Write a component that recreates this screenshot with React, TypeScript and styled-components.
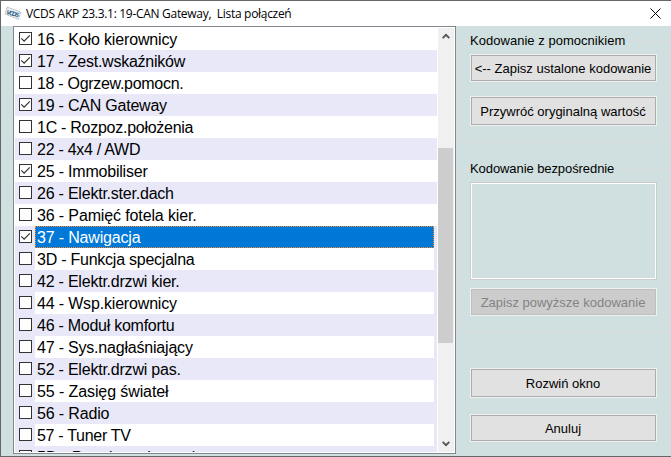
import React from "react";
import styled, { createGlobalStyle } from "styled-components";

const Global = createGlobalStyle`
  * { box-sizing: border-box; }
  body { margin: 0; background: #d0e0e0; overflow: hidden; }
`;

const Window = styled.div`
  display: flex;
  flex-direction: column;
  width: 671px;
  height: 457px;
  background: #d0e0e0;
  border: 1px solid #646668;
  border-right: 0;
  color: #000;
  font-family: "Liberation Sans", Arial, sans-serif;
  overflow: hidden;
`;

const TitleBar = styled.header`
  display: flex;
  align-items: center;
  flex: none;
  height: 25px;
  padding: 0 9px 0 3px;
  background: #fff;
`;

const Title = styled.div`
  flex: 1;
  margin-left: 4px;
  font: 12px/24px "Open Sans", "Noto Sans", sans-serif;
  letter-spacing: -0.3px;
  white-space: pre;
`;

const CloseButton = styled.button`
  display: flex;
  width: 11px;
  height: 11px;
  margin-right: 1px;
  padding: 0;
  border: 0;
  background: none;
`;

const Body = styled.main`
  display: flex;
  align-items: flex-start;
  padding-left: 12px;
`;

const ListBox = styled.section`
  display: flex;
  flex: none;
  width: 443px;
  height: 428px;
  padding: 1px;
  border: 1px solid #828790;
  background: #fff;
`;

const Rows = styled.div`
  width: 422px;
  height: 424px;
  margin-right: 1px;
  overflow: hidden;
`;

const Row = styled.div<{ $striped: boolean }>`
  display: flex;
  align-items: flex-start;
  height: 22px;
  padding: 0 3px 0 4px;
  background: ${(p) => (p.$striped ? "#e8e8f8" : "#fff")};
`;

const Check = styled.span`
  display: flex;
  flex: none;
  width: 13px;
  height: 13px;
  margin: 4px 3px 0 0;
  border: 1px solid #333;
  background: #fff;
`;

const Label = styled.span<{ $fill: string; $selected: boolean; $spacing: number }>`
  flex: 1;
  height: 22px;
  padding-left: 1px;
  border: 1px ${(p) => (p.$selected ? "dotted #ff8728" : "solid transparent")};
  background: ${(p) => p.$fill};
  color: ${(p) => (p.$selected ? "#fff" : "#000")};
  font-size: 16px;
  line-height: 21px;
  letter-spacing: ${(p) => p.$spacing}px;
  white-space: pre;
`;

const ScrollBar = styled.div`
  display: flex;
  flex-direction: column;
  align-items: center;
  width: 16px;
  height: 424px;
  background: #f0f0f0;
`;

const Arrow = styled.div<{ $down?: boolean }>`
  display: flex;
  align-items: center;
  justify-content: center;
  height: 17px;
  margin-top: ${(p) => (p.$down ? "auto" : "0")};
  transform: ${(p) => (p.$down ? "rotate(180deg)" : "none")};
`;

const Thumb = styled.div`
  width: 15px;
  height: 195px;
  margin: 103px 1px 0 0;
  background: #cdcdcd;
`;

const Side = styled.aside`
  display: flex;
  flex-direction: column;
  width: 206px;
  margin-left: 5px;
  padding-top: 7px;
`;

const Group = styled.fieldset<{ $height: number }>`
  display: flex;
  flex-direction: column;
  min-width: 0;
  height: ${(p) => p.$height}px;
  margin: 0;
  padding: 0 8px;
  border: 1px solid #dcdcdc;
`;

const Legend = styled.legend<{ $spacing: number }>`
  height: 16px;
  margin-left: 0;
  padding: 0 3px 0 0;
  font-size: 13px;
  line-height: 16px;
  letter-spacing: ${(p) => p.$spacing}px;
`;

const Button = styled.button<{ $height: number; $top: number; $spacing?: number }>`
  flex: none;
  width: 187px;
  height: ${(p) => p.$height}px;
  margin-top: ${(p) => p.$top}px;
  padding: 1px 1px 0 0;
  border: 1px solid #f0f0f0;
  outline: 1px solid #adadad;
  outline-offset: -2px;
  background: #e1e1e1;
  color: #000;
  font: 13px/16px "Liberation Sans", Arial, sans-serif;
  letter-spacing: ${(p) => p.$spacing ?? 0}px;
  white-space: nowrap;
  &:disabled {
    background: #ccc;
    outline-color: #bfbfbf;
    color: #838383;
  }
`;

const CodingField = styled.div`
  flex: none;
  width: 187px;
  height: 98px;
  margin-top: 5px;
  border: 1px solid #ccc;
  outline: 1px solid #fff;
  outline-offset: -2px;
`;

const Spacer = styled.div<{ $size: number }>`
  flex: none;
  height: ${(p) => p.$size}px;
`;

const Actions = styled.div`
  display: flex;
  flex-direction: column;
  padding-left: 9px;
`;

type Module = { name: string; on?: boolean; spacing: number };

const modules: Module[] = [
  { name: "16 - Koło kierownicy", on: true, spacing: -0.15 },
  { name: "17 - Zest.wskaźników", on: true, spacing: -0.25 },
  { name: "18 - Ogrzew.pomocn.", spacing: -0.3 },
  { name: "19 - CAN Gateway", on: true, spacing: -0.22 },
  { name: "1C - Rozpoz.położenia", spacing: -0.27 },
  { name: "22 - 4x4 / AWD", spacing: -0.27 },
  { name: "25 - Immobiliser", on: true, spacing: -0.2 },
  { name: "26 - Elektr.ster.dach", spacing: -0.22 },
  { name: "36 - Pamięć fotela kier.", spacing: -0.13 },
  { name: "37 - Nawigacja", on: true, spacing: -0.17 },
  { name: "3D - Funkcja specjalna", spacing: -0.24 },
  { name: "42 - Elektr.drzwi kier.", spacing: -0.22 },
  { name: "44 - Wsp.kierownicy", spacing: -0.17 },
  { name: "46 - Moduł komfortu", spacing: -0.26 },
  { name: "47 - Sys.nagłaśniający", spacing: -0.2 },
  { name: "52 - Elektr.drzwi pas.", spacing: -0.22 },
  { name: "55 - Zasięg świateł", spacing: -0.1 },
  { name: "56 - Radio", spacing: -0.15 },
  { name: "57 - Tuner TV", spacing: -0.3 },
  { name: "5D - Panel ster.kontrol", spacing: 0 },
];
const selected = 9;

const labelFill = (i: number) =>
  i === selected ? "#0078d7" : i > selected && i % 2 === 0 ? "#fff" : "transparent";

const ArrowIcon = () => (
  <svg width="8" height="7" viewBox="0 0 8 7">
    <path d="M0.7 5.2 4 1.9 7.3 5.2" fill="none" stroke="#555" strokeWidth="1.9" />
  </svg>
);

const AppIcon = () => (
  <svg width="18" height="15" viewBox="0 0 18 15">
    <path d="M3 1 17 6 14.5 13.5 1 8Z" fill="#e6eaec" stroke="#aab4bb" strokeWidth=".9" strokeDasharray="2 1" />
    <text x="2" y="8" transform="rotate(14 2 8)" fontSize="6.2" fontWeight="700" fontStyle="italic" fontFamily="Liberation Sans" fill="#28608a" textLength="13">
      VCDS
    </text>
  </svg>
);

export default function App() {
  return (
    <Window>
      <Global />
      <TitleBar>
        <AppIcon />
        <Title>VCDS AKP 23.3.1: 19-CAN Gateway,  Lista połączeń</Title>
        <CloseButton aria-label="Zamknij">
          <svg width="11" height="11" viewBox="0 0 11 11">
            <path d="M.5.5 10.5 10.5M10.5.5.5 10.5" stroke="#000" strokeWidth="1" />
          </svg>
        </CloseButton>
      </TitleBar>
      <Body>
        <ListBox>
          <Rows>
            {modules.map((m, i) => (
              <Row key={m.name} $striped={i % 2 === 1 || i > selected}>
                <Check>
                  {m.on && (
                    <svg width="11" height="11" viewBox="0 0 11 11">
                      <path d="M1.3 5.3 4.1 8.1 9.8 2.4" fill="none" stroke="#333" strokeWidth="1.2" />
                    </svg>
                  )}
                </Check>
                <Label $fill={labelFill(i)} $selected={i === selected} $spacing={m.spacing}>
                  {m.name}
                </Label>
              </Row>
            ))}
          </Rows>
          <ScrollBar>
            <Arrow><ArrowIcon /></Arrow>
            <Thumb />
            <Arrow $down><ArrowIcon /></Arrow>
          </ScrollBar>
        </ListBox>
        <Side>
          <Group $height={109}>
            <Legend $spacing={0.03}>Kodowanie z pomocnikiem</Legend>
            <Button $height={28} $top={5}>&lt;-- Zapisz ustalone kodowanie</Button>
            <Button $height={30} $top={14}>Przywróć oryginalną wartość</Button>
          </Group>
          <Spacer $size={19} />
          <Group $height={171}>
            <Legend $spacing={-0.08}>Kodowanie bezpośrednie</Legend>
            <CodingField />
            <Button $height={28} $top={8} disabled>Zapisz powyższe kodowanie</Button>
          </Group>
          <Actions>
            <Button $height={30} $top={36}>Rozwiń okno</Button>
            <Button $height={28} $top={16}>Anuluj</Button>
          </Actions>
        </Side>
      </Body>
    </Window>
  );
}
